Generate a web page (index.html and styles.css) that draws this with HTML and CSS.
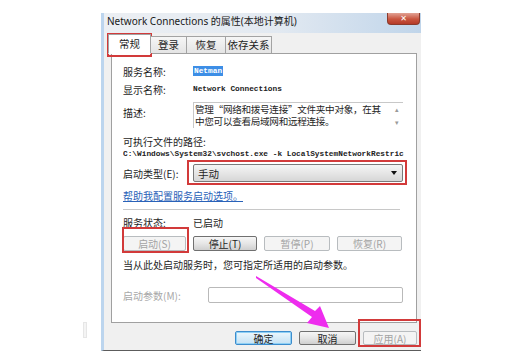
FILE: index.html
```html
<!DOCTYPE html>
<html>
<head>
<meta charset="utf-8">
<link rel="stylesheet" href="styles.css">
</head>
<body>
<div class="stage">
  <div class="dialog">
    <div class="titlebar">
      <span class="title">Network Connections 的属性(本地计算机)</span>
      <span class="close">✕</span>
    </div>
    <div class="tabs">
      <span class="tab active">常规</span>
      <span class="tab">登录</span>
      <span class="tab">恢复</span>
      <span class="tab">依存关系</span>
    </div>
    <div class="panel">
      <div class="row r1"><span class="lbl">服务名称:</span><span class="mono sel">Netman</span></div>
      <div class="row r2"><span class="lbl">显示名称:</span><span class="mono">Network Connections</span></div>
      <div class="row r3"><span class="lbl">描述:</span>
        <div class="desc">
          <div class="desc-text"><div>管理“网络和拨号连接”文件夹中对象，在其</div><div>中您可以查看局域网和远程连接。</div></div>
          <div class="scroll"><span>▴</span><span>▾</span></div>
        </div>
      </div>
      <div class="plain r4">可执行文件的路径:</div>
      <div class="mono path">C:\Windows\System32\svchost.exe -k LocalSystemNetworkRestric</div>
      <div class="row r5"><span class="lbl">启动类型(E):</span>
        <div class="combo"><span>手动</span><span class="caret"></span></div>
      </div>
      <div class="link-row"><span class="link">帮助我配置服务启动选项。</span></div>
      <div class="sep"></div>
      <div class="row r6"><span class="lbl">服务状态:</span><span>已启动</span></div>
      <div class="btnrow">
        <span class="btn dis">启动(S)</span>
        <span class="btn">停止(T)</span>
        <span class="btn dis">暂停(P)</span>
        <span class="btn dis">恢复(R)</span>
      </div>
      <div class="plain r7">当从此处启动服务时，您可指定所适用的启动参数。</div>
      <div class="row r8"><span class="lbl dim wide">启动参数(M):</span><span class="input"></span></div>
    </div>
    <div class="footer">
      <span class="btn fbtn def">确定</span>
      <span class="btn fbtn">取消</span>
      <span class="btn fbtn dis">应用(A)</span>
    </div>
  </div>

  <div class="mark m1"></div>
  <div class="mark m2"></div>
  <div class="mark m3"></div>
  <div class="mark m4"></div>
  <div class="blip"></div>

  <svg class="arrow" width="516" height="361" viewBox="0 0 516 361">
    <polygon points="256,276 315,311 320,306 329,328 307,323 312,317 256,278" fill="#ee2cee"/>
  </svg>
</div>
</body>
</html>
```

FILE: styles.css
```css
* { box-sizing: border-box; }
html, body { margin: 0; padding: 0; background: #ffffff; }
body {
  font-family: "Noto Sans CJK SC", "Noto Sans", sans-serif;
  font-size: 10px;
  color: #1e1e1e;
}
.stage { position: relative; width: 516px; height: 361px; overflow: hidden; }

.dialog {
  margin: 13px 0 0 101px;
  width: 320px;
  height: 338px;
  background: #f0f0f0;
  border-left: 3px solid #bcd5ee;
  border-bottom: 1px solid #5c5c5c;
  display: flex;
  flex-direction: column;
}

.titlebar {
  height: 20px;
  display: flex;
  align-items: flex-start;
  justify-content: space-between;
  background: linear-gradient(90deg, #eceff3 0%, #e2e9f1 55%, #c0d5ea 100%);
  padding-left: 3px;
}
.title {
  font-family: "Noto Sans", "Noto Sans CJK SC", sans-serif;
  font-size: 10px;
  line-height: 15px;
  padding-top: 1px;
  color: #1a1a1a;
  white-space: nowrap;
}
.close {
  width: 33px;
  height: 12px;
  margin-right: 1px;
  background: linear-gradient(#e2a294, #c9553f 55%, #b53a28);
  border: 1px solid #8a3a2c;
  border-top: none;
  border-radius: 0 0 4px 4px;
  color: #fff;
  font-size: 8px;
  font-weight: bold;
  line-height: 11px;
  text-align: center;
  font-family: "DejaVu Sans", sans-serif;
}

.tabs {
  height: 20px;
  display: flex;
  align-items: flex-end;
  padding-left: 4px;
  position: relative;
  z-index: 1;
}
.tab {
  height: 17px;
  padding: 0;
  text-align: center;
  white-space: nowrap;
  line-height: 16px;
  border: 1px solid #a3a3a3;
  border-bottom: none;
  background: linear-gradient(#f6f6f6, #e4e4e4);
  margin-left: -1px;
  font-size: 10.5px;
}
.tab:nth-child(2) { width: 37px; }
.tab:nth-child(3) { width: 40px; }
.tab:nth-child(4) { width: 47px; }
.tab.active {
  height: 20px;
  width: 43px;
  background: #ffffff;
  margin-left: 0;
  line-height: 18px;
  border-bottom: 1px solid #ffffff;
  margin-bottom: -1px;
}

.panel {
  margin-left: 7px;
  width: 306px;
  height: 270px;
  border: 1px solid #a0a0a0;
  background: #ffffff;
  padding: 9px 13px 0 11px;
  display: flex;
  flex-direction: column;
}
.row { display: flex; align-items: center; white-space: nowrap; }
.lbl { width: 70px; flex: none; }
.lbl.wide { width: 85px; }
.dim { color: #a8a8a8; }
.r1, .r2 { height: 16px; }
.r2 { margin-top: 2px; }
.mono {
  font-family: "Liberation Mono", monospace;
  font-size: 7.8px;
  font-weight: bold;
  color: #222;
}
.sel { background: #3d8ee6; color: #fff; padding: 0 1px; line-height: 10px; }

.r3 { margin-top: 5px; height: 26px; align-items: flex-start; }
.r3 .lbl { padding-top: 3px; }
.desc {
  width: 210px;
  height: 26px;
  border-top: 1px solid #c8c8c8;
  border-left: 1px solid #c8c8c8;
  display: flex;
}
.desc-text {
  flex: 1;
  font-size: 9.6px;
  line-height: 12px;
  padding: 0 0 0 1px;
  letter-spacing: -0.3px;
  white-space: nowrap;
}
.scroll {
  width: 12px;
  display: flex;
  flex-direction: column;
  justify-content: space-between;
  align-items: center;
  color: #9a9a9a;
  font-size: 7px;
  line-height: 12px;
}

.plain { line-height: 14px; white-space: nowrap; }
.r4 { margin-top: 7px; }
.path { line-height: 10px; white-space: nowrap; overflow: hidden; width: 282px; }

.r5 { margin-top: 5px; height: 18px; }
.combo {
  width: 210px;
  height: 18px;
  border: 1px solid #7a7a7a;
  border-radius: 2px;
  background: linear-gradient(#f4f4f4, #e6e6e6 50%, #d6d6d6);
  display: flex;
  align-items: center;
  justify-content: space-between;
  padding: 0 5px 0 4px;
  font-size: 10.5px;
}
.caret {
  width: 0; height: 0;
  border-left: 3px solid transparent;
  border-right: 3px solid transparent;
  border-top: 4px solid #111;
}

.link-row { margin-top: 7px; line-height: 14px; white-space: nowrap; }
.link {
  color: #2a62b8;
  text-decoration: underline;
}
.sep { margin-top: 6px; height: 1px; width: 277px; background: #c8c8c8; }
.r6 { margin-top: 5px; height: 14px; }

.btnrow {
  margin-top: 7px;
  display: flex;
  gap: 7px;
}
.btn {
  height: 15px;
  width: 64px;
  border: 1px solid #707070;
  border-radius: 2px;
  background: linear-gradient(#f6f6f6, #e6e6e6 50%, #cfcfcf);
  display: flex;
  align-items: center;
  justify-content: center;
  font-size: 10px;
  line-height: 13px;
  white-space: nowrap;
}
.btn.dis {
  border-color: #b8bcbf;
  background: #f4f4f4;
  color: #a3a3a3;
}
.btnrow .btn:first-child { width: 63px; }
.btnrow .btn:nth-child(3) { width: 66px; }
.btnrow .btn:nth-child(4) { width: 65px; }

.r7 { margin-top: 7px; }
.r8 { margin-top: 15px; height: 16px; }
.input {
  width: 195px;
  height: 16px;
  border: 1px solid #b9b9b9;
  border-radius: 2px;
  background: #fff;
}

.footer {
  display: flex;
  justify-content: flex-end;
  gap: 7px;
  padding: 8px 4px 0 0;
}
.fbtn { width: 57px; height: 14px; }
.fbtn.def {
  border-color: #3c8ccd;
  box-shadow: inset 0 0 0 1px #8fd0f5;
  background: linear-gradient(#eef7fc, #d8ecf8 50%, #c6e2f4);
}
.fbtn.dis { width: 54px; }

.mark { position: absolute; border: 2px solid #d23a3a; }
.m1 { left: 107px; top: 33px; width: 45px; height: 24px; }
.m2 { left: 187px; top: 160px; width: 220px; height: 25px; }
.m3 { left: 122px; top: 227px; width: 67px; height: 26px; }
.m4 { left: 358px; top: 319px; width: 63px; height: 28px; }

.blip {
  position: absolute;
  left: 83px; top: 322px;
  width: 4px; height: 16px;
  border: 1px solid #e6e6e6;
  background: #f4f4f4;
}
.arrow { position: absolute; left: 0; top: 0; }
```
